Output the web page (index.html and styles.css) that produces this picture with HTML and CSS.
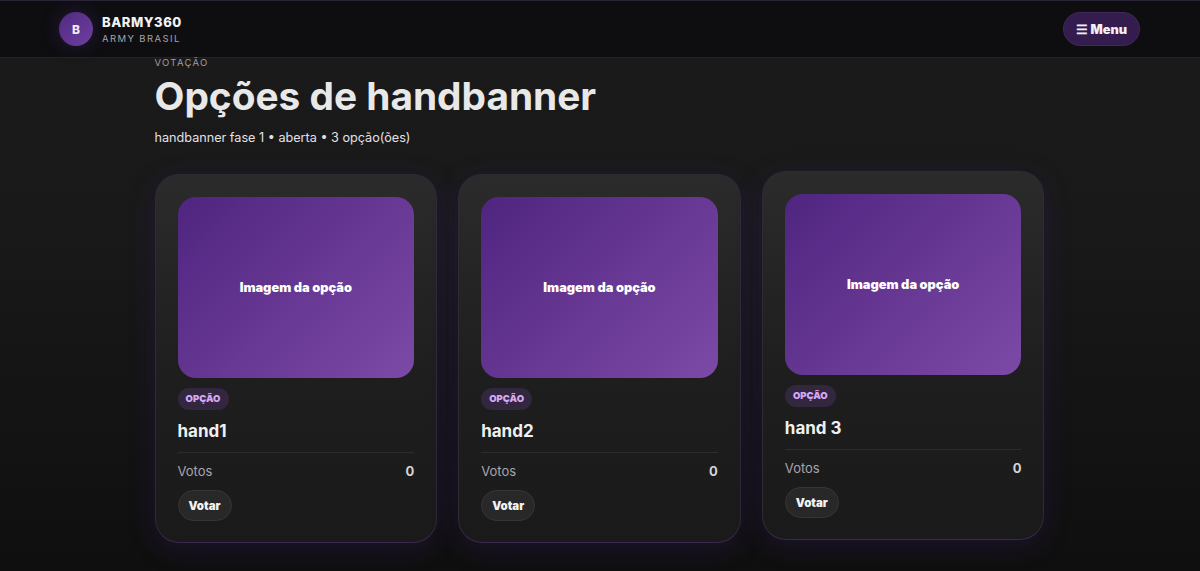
FILE: index.html
```html
<!DOCTYPE html>
<html lang="pt-BR">
  <head>
    <meta charset="UTF-8" />
    <meta name="viewport" content="width=device-width, initial-scale=1.0" />
    <title>BARMY360 | Votação</title>
    <link rel="stylesheet" href="styles.css">
  </head>
  <body>
    <header class="topbar">
      <div class="brand">
        <div class="brand-mark">B</div>
        <div class="brand-text">
          <p class="brand-name">BARMY360</p>
          <p class="brand-sub">ARMY BRASIL</p>
        </div>
      </div>
      <button class="menu-btn">☰ Menu</button>
    </header>

    <main class="page">
      <p class="eyebrow">VOTAÇÃO</p>
      <h1 class="page-title">Opções de handbanner</h1>
      <p class="page-meta">handbanner fase 1 • aberta • 3 opção(ões)</p>

      <section class="cards">
        <article class="card">
          <div class="card-image">Imagem da opção</div>
          <span class="tag">OPÇÃO</span>
          <h2 class="card-title">hand1</h2>
          <div class="votes"><span class="votes-label">Votos</span><span class="votes-count">0</span></div>
          <button class="vote-btn">Votar</button>
        </article>
        <article class="card">
          <div class="card-image">Imagem da opção</div>
          <span class="tag">OPÇÃO</span>
          <h2 class="card-title">hand2</h2>
          <div class="votes"><span class="votes-label">Votos</span><span class="votes-count">0</span></div>
          <button class="vote-btn">Votar</button>
        </article>
        <article class="card card-hover">
          <div class="card-image">Imagem da opção</div>
          <span class="tag">OPÇÃO</span>
          <h2 class="card-title">hand 3</h2>
          <div class="votes"><span class="votes-label">Votos</span><span class="votes-count">0</span></div>
          <button class="vote-btn">Votar</button>
        </article>
      </section>
    </main>
  </body>
</html>
```

FILE: styles.css
```css
* {
  box-sizing: border-box;
  padding: 0;
  margin: 0;
}

html,
body {
  height: 100%;
  overflow: hidden;
}

body {
  font-family: 'Inter', sans-serif;
  background: linear-gradient(180deg, #1a1a1a 0%, #191919 40%, #0f0f0f 100%);
  color: #ececec;
}

.topbar {
  height: 58px;
  padding: 11px 60px 0 59px;
  display: flex;
  justify-content: space-between;
  align-items: flex-start;
  background: #0e0e10;
  border-top: 1px solid #2a2438;
  border-bottom: 1px solid #232323;
}

.brand {
  display: flex;
  align-items: center;
  gap: 9px;
}

.brand-mark {
  width: 34px;
  height: 34px;
  border-radius: 50%;
  background: linear-gradient(135deg, #4f2a80, #6f3fa0);
  box-shadow: 0 0 18px rgba(91, 45, 145, 0.35);
  color: #f0e8f8;
  font-size: 12px;
  font-weight: 800;
  display: flex;
  align-items: center;
  justify-content: center;
}

.brand-name {
  font-size: 13px;
  font-weight: 800;
  letter-spacing: 0.55px;
  line-height: 16px;
  color: #f2f2f2;
}

.brand-sub {
  font-size: 9.5px;
  letter-spacing: 1.4px;
  line-height: 12px;
  margin-top: 3px;
  color: #a8a3ad;
}

.menu-btn {
  height: 34px;
  width: 77px;
  border-radius: 17px;
  border: 1px solid #3d2a55;
  background: #341c4f;
  color: #f2eef6;
  font-family: inherit;
  font-size: 12.8px;
  font-weight: 900;
}

.page {
  width: 890px;
  margin-left: 154.5px;
}

.eyebrow {
  font-size: 9.5px;
  letter-spacing: 1.3px;
  line-height: 12px;
  margin-top: -1px;
  color: #a09ca6;
}

.page-title {
  font-size: 38.8px;
  font-weight: 700;
  line-height: 50px;
  margin-top: 2px;
  color: #e8e8e8;
}

.page-meta {
  font-size: 12.65px;
  line-height: 18px;
  margin-top: 8px;
  color: #e4e0e8;
}

.cards {
  display: grid;
  grid-template-columns: repeat(3, 1fr);
  gap: 21px;
  margin-top: 27px;
}

.card {
  height: 369px;
  padding: 22px 22px 0;
  border-radius: 24px;
  border: 1px solid #2e2b35;
  border-bottom-color: #3a2a50;
  background: linear-gradient(180deg, #2b2b2b 0%, #1e1e1e 55%, #1a1a1a 100%);
  box-shadow: 0 6px 26px rgba(60, 30, 120, 0.28);
}

.card-hover {
  transform: translateY(-3px);
}

.card-image {
  height: 181px;
  border-radius: 18px;
  background: linear-gradient(135deg, #4f2580, #7c49a6);
  display: flex;
  align-items: center;
  justify-content: center;
  color: #fff;
  font-size: 12.8px;
  font-weight: 900;
}

.tag {
  display: block;
  width: 51px;
  height: 22px;
  margin-top: 10px;
  border-radius: 11px;
  background: #33263f;
  color: #d6a8f5;
  font-size: 9.5px;
  font-weight: 900;
  line-height: 22px;
  text-align: center;
}

.card-title {
  font-size: 17px;
  font-weight: 700;
  line-height: 22px;
  margin-top: 10px;
  padding-bottom: 10px;
  border-bottom: 1px solid #2c2c2c;
  color: #f0f0f0;
}

.votes {
  display: flex;
  justify-content: space-between;
  align-items: center;
  margin-top: 9px;
  line-height: 18px;
  font-size: 13px;
}

.votes-label {
  color: #a9a5ad;
}

.votes-count {
  color: #d5d3d8;
  font-weight: 700;
}

.vote-btn {
  display: block;
  width: 54px;
  height: 31px;
  margin-top: 10px;
  border-radius: 16px;
  border: 1px solid #363636;
  background: #282828;
  color: #f2f2f2;
  font-family: inherit;
  font-size: 11.5px;
  font-weight: 900;
}
```
